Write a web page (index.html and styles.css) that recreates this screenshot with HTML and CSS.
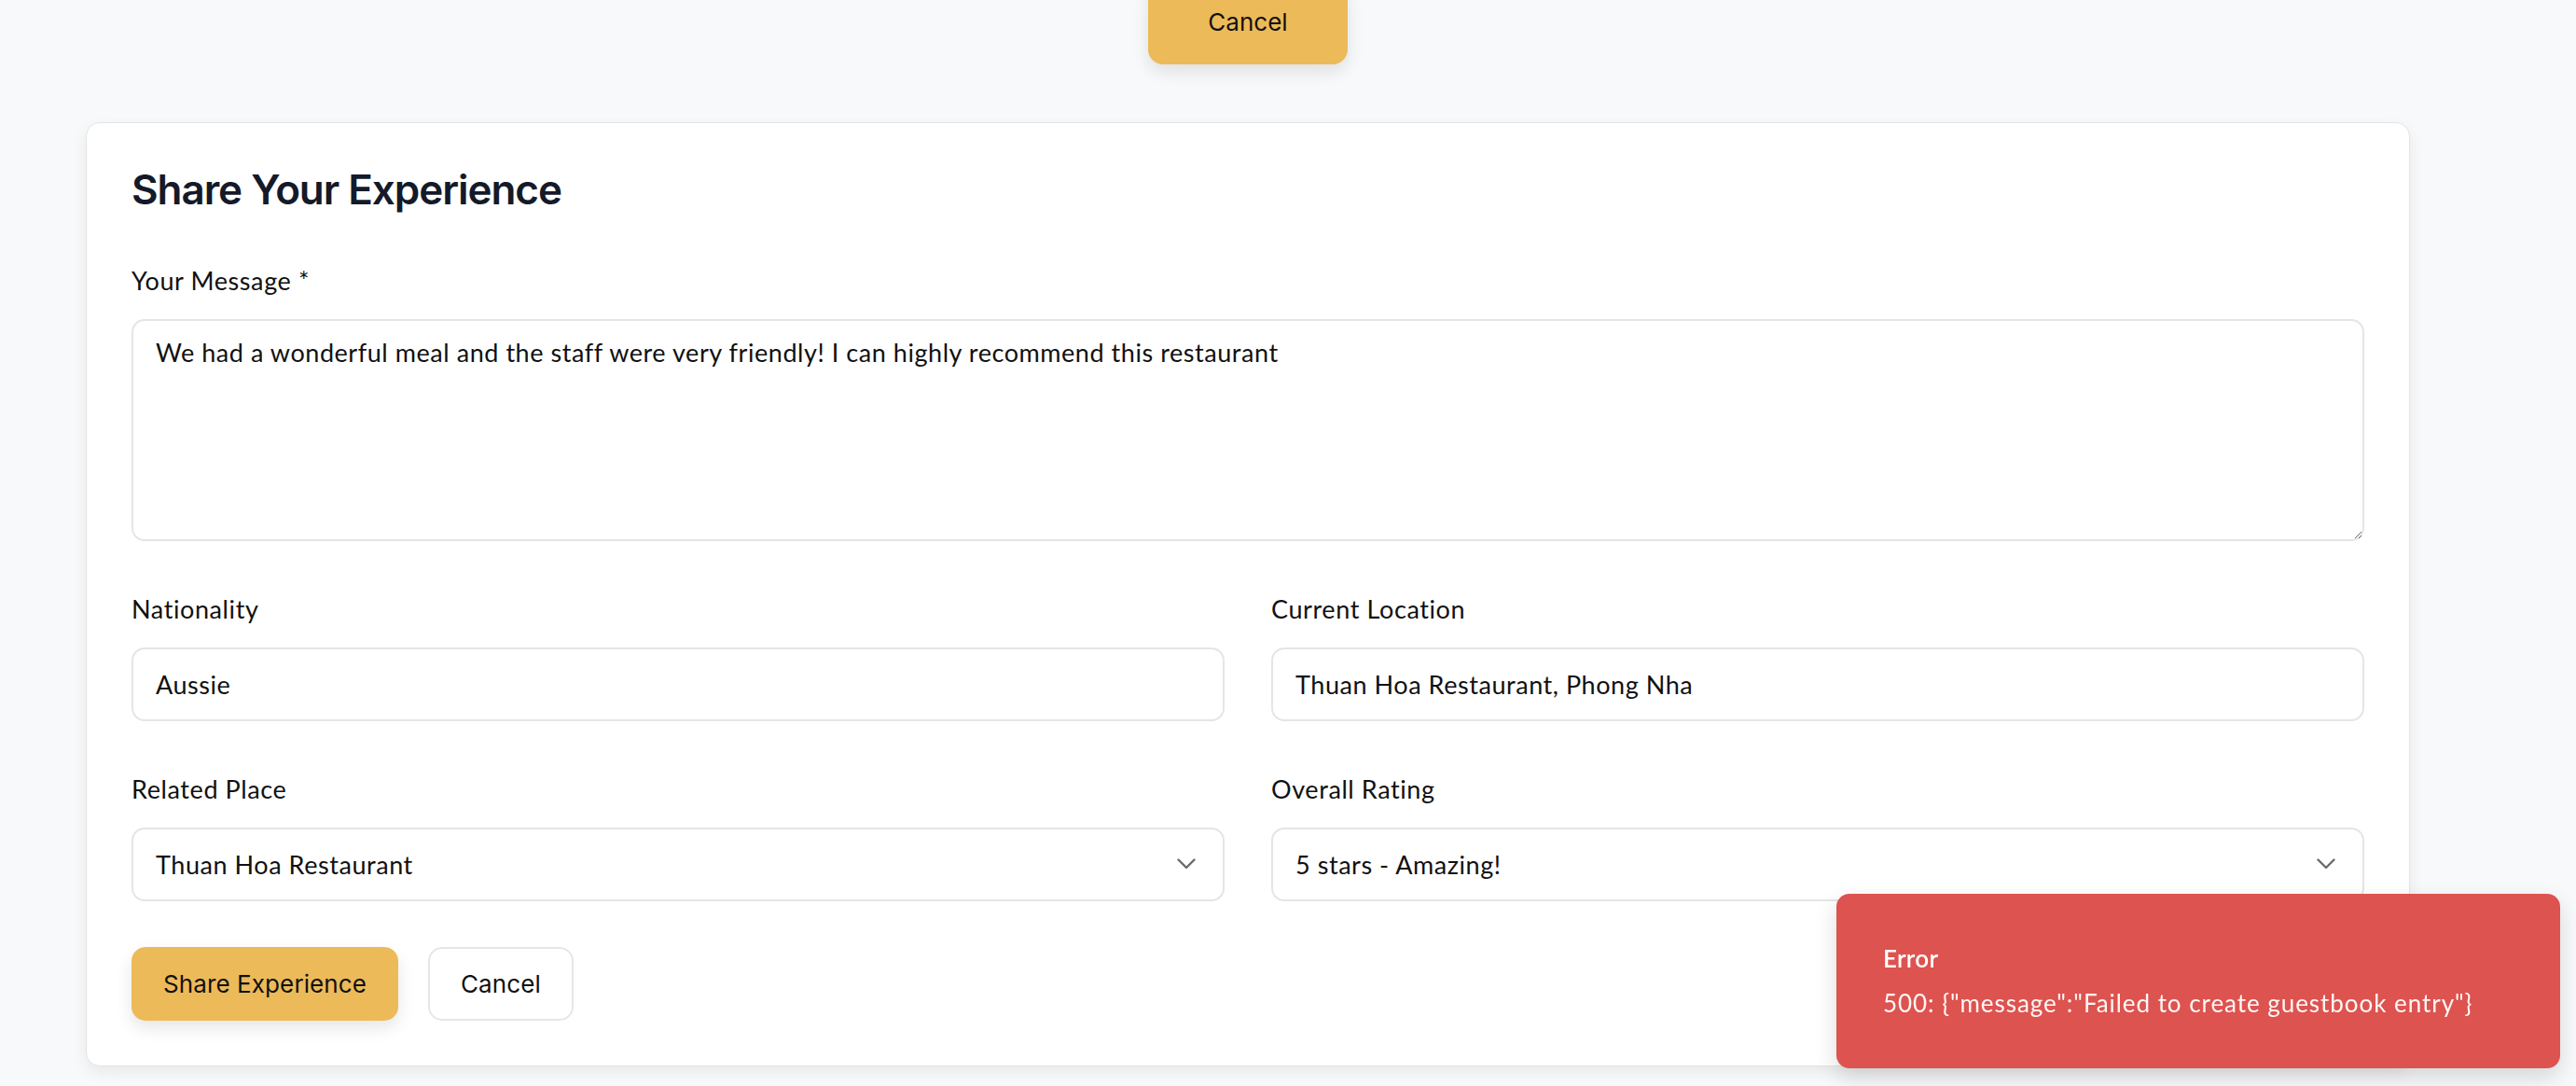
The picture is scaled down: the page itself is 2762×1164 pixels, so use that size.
FILE: index.html
```html
<!DOCTYPE html>
<html lang="en">
<head>
<meta charset="utf-8">
<title>Share Your Experience</title>
<link rel="stylesheet" href="styles.css">
</head>
<body>
<div class="page">
  <div class="top-actions">
    <button class="btn btn-yellow btn-top" type="button">Cancel</button>
  </div>

  <form class="card">
    <h2 class="card-title">Share Your Experience</h2>

    <div class="field">
      <label class="label" for="msg">Your Message *</label>
      <textarea id="msg" class="control textarea">We had a wonderful meal and the staff were very friendly! I can highly recommend this restaurant</textarea>
    </div>

    <div class="grid">
      <div class="field">
        <label class="label" for="nat">Nationality</label>
        <input id="nat" class="control input" type="text" value="Aussie">
      </div>
      <div class="field">
        <label class="label" for="loc">Current Location</label>
        <input id="loc" class="control input" type="text" value="Thuan Hoa Restaurant, Phong Nha">
      </div>
    </div>

    <div class="grid">
      <div class="field">
        <label class="label" for="place">Related Place</label>
        <div class="select-wrap">
          <select id="place" class="control select">
            <option>Thuan Hoa Restaurant</option>
          </select>
          <svg class="chevron" viewBox="0 0 20 12" width="20" height="12" aria-hidden="true"><path d="M1.5 1.5 L10 10 L18.5 1.5" fill="none" stroke="#6b6b6b" stroke-width="2.4" stroke-linecap="round" stroke-linejoin="round"/></svg>
        </div>
      </div>
      <div class="field">
        <label class="label" for="rating">Overall Rating</label>
        <div class="select-wrap">
          <select id="rating" class="control select">
            <option>5 stars - Amazing!</option>
          </select>
          <svg class="chevron" viewBox="0 0 20 12" width="20" height="12" aria-hidden="true"><path d="M1.5 1.5 L10 10 L18.5 1.5" fill="none" stroke="#6b6b6b" stroke-width="2.4" stroke-linecap="round" stroke-linejoin="round"/></svg>
        </div>
      </div>
    </div>

    <div class="actions">
      <button class="btn btn-yellow btn-shadow" type="button">Share Experience</button>
      <button class="btn btn-outline" type="button">Cancel</button>
    </div>
  </form>
</div>

<div class="toast" role="alert">
  <div class="toast-title">Error</div>
  <div class="toast-desc">500: {"message":"Failed to create guestbook entry"}</div>
</div>
</body>
</html>
```

FILE: styles.css
```css
* { box-sizing: border-box; }

html, body {
  margin: 0;
  padding: 0;
  height: 100%;
  overflow: hidden;
}

body {
  background: #f8f9fb;
  font-family: "Lato", "Noto Sans", sans-serif;
  color: #111;
}

.page {
  width: 2492px;
  margin-left: 92px;
}

.top-actions {
  display: flex;
  justify-content: center;
  margin-top: -22px;
  margin-bottom: 62px;
}

.btn {
  font-family: "Inter", "Noto Sans", sans-serif;
  font-size: 26px;
  font-weight: 400;
  line-height: 37px;
  letter-spacing: 0.1px;
  color: #111;
  border: 1px solid transparent;
  border-radius: 15px;
  padding: 20px 33px;
  cursor: pointer;
}

.btn-yellow {
  background: #ecba59;
}

.btn-top {
  padding: 26px 63px;
  letter-spacing: 0;
  border-radius: 16px;
  box-shadow: 0 8px 18px rgba(0, 0, 0, 0.10);
}

.btn-shadow {
  box-shadow: 0 8px 18px rgba(0, 0, 0, 0.10);
}

.btn-outline {
  background: #fff;
  border: 2px solid #e6e6e6;
  padding: 19px 33px;
}

.card {
  background: #fff;
  border: 1px solid #e4e4e4;
  border-radius: 15px;
  padding: 48px;
  box-shadow: 0 6px 16px rgba(0, 0, 0, 0.07);
  display: flex;
  flex-direction: column;
  gap: 55px;
}

.card-title {
  margin: 0;
  font-family: "Inter", "Noto Sans", sans-serif;
  font-weight: 600;
  font-size: 44px;
  line-height: 53px;
  letter-spacing: -1.05px;
  color: #141a29;
  margin-top: -3px;
  margin-bottom: -2px;
}

.field {
  display: flex;
  flex-direction: column;
  gap: 23px;
}

.label {
  font-size: 27px;
  line-height: 36px;
  letter-spacing: 0.6px;
  color: #111;
}

.grid {
  display: grid;
  grid-template-columns: 1fr 1fr;
  gap: 50px;
}

.control {
  font-family: "Lato", "Noto Sans", sans-serif;
  font-size: 27px;
  letter-spacing: 0.55px;
  color: #111;
  background: #fff;
  border: 2px solid #e5e5e5;
  border-radius: 14px;
  width: 100%;
  outline: none;
}

.textarea {
  height: 238px;
  padding: 16px 24px;
  line-height: 36px;
  resize: vertical;
  display: block;
}

.input {
  height: 79px;
  padding: 0 24px;
}

.select-wrap {
  position: relative;
}

.select {
  appearance: none;
  -webkit-appearance: none;
  height: 79px;
  padding: 0 24px;
  display: block;
}

.chevron {
  position: absolute;
  right: 31px;
  top: 33px;
  pointer-events: none;
}

.actions {
  display: flex;
  gap: 32px;
  margin-top: -6px;
}

.toast {
  position: fixed;
  right: 17px;
  bottom: 19px;
  width: 776px;
  height: 187px;
  background: #dd534f;
  color: #fff;
  border-radius: 14px;
  padding: 52px 50px;
  box-shadow: 0 10px 24px rgba(0, 0, 0, 0.14);
}

.toast-title {
  font-size: 26px;
  font-weight: 600;
  line-height: 34px;
  letter-spacing: 0.3px;
}

.toast-desc {
  margin-top: 14px;
  font-size: 26px;
  line-height: 34px;
  letter-spacing: 0.95px;
  opacity: 0.95;
}
```
